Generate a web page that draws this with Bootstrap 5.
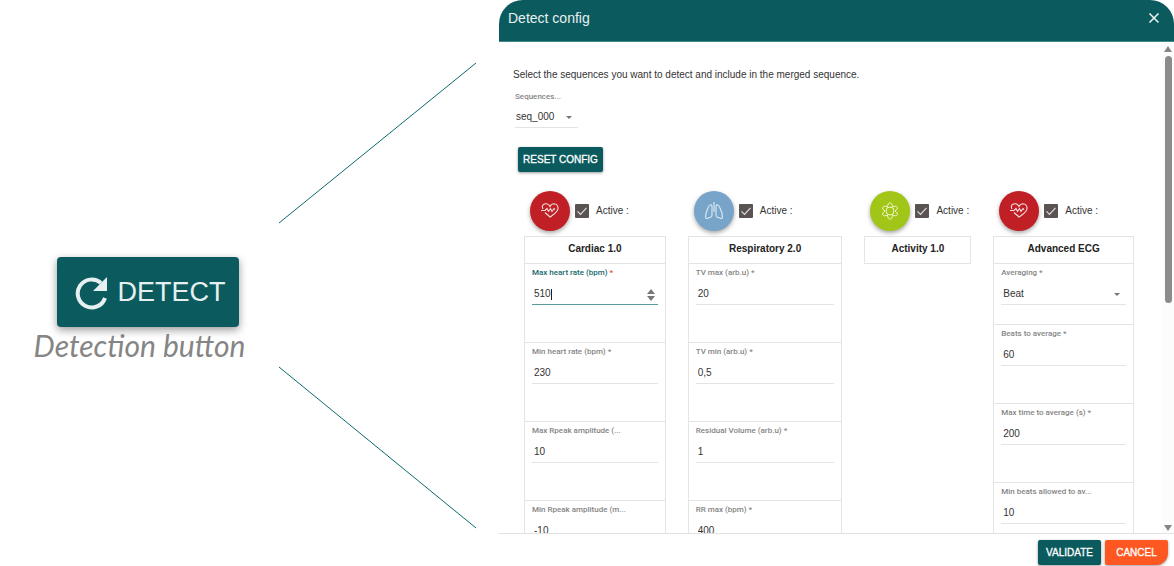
<!DOCTYPE html>
<html lang="en">
<head>
<meta charset="utf-8">
<meta name="viewport" content="width=device-width, initial-scale=1">
<title>Detect config</title>
<link href="https://cdn.jsdelivr.net/npm/bootstrap@5.3.0/dist/css/bootstrap.min.css" rel="stylesheet">
<style>
:root{--teal:#0b5a5e;--rule:#e4e4e4;--ink:#333}
body{font-family:"Liberation Sans",Arial,sans-serif;font-size:10px;line-height:14px;color:var(--ink);background:#fff}
.stage{display:grid;grid-template-columns:279fr 197fr 23fr 675fr;height:100vh}
.callout-col{padding-top:54px}
.btn{--bs-btn-border-width:0;border-radius:2px;color:#fff;white-space:nowrap}
.btn-teal,.btn-teal:hover{background:var(--teal);color:#fff}
.btn-orange,.btn-orange:hover{background:#ff5722;color:#fff}
.btn-detect{width:182px;height:70px;font-size:27px;line-height:32px;padding:0 13px 0 18px;border-radius:4px;color:#e6f0f0;box-shadow:0 3px 8px rgba(0,0,0,.4)}
.btn-small{height:25px;padding:0 5px;font-size:10px;line-height:25px;box-shadow:0 1px 3px rgba(0,0,0,.4);-webkit-text-stroke:.3px #fff}
.reset-btn{width:85px;margin:19px 0 0 19px}
.figure-text{font:italic 30px/36px Lato,sans-serif;color:#858585}
.dialog-head{height:42px;background:var(--teal);border-bottom:1px solid #3f8a8b;border-radius:24px 24px 0 0;padding:0 12px 5px 9px}
.dialog-title{font-size:14px;line-height:18px;color:#e9f1f1}
.dialog-foot{height:33px;border-top:1px solid #e2e2e2;padding:4px 6px 0 0}
.dialog-foot .btn{width:63px}
.dialog-foot .btn-orange{border-bottom-right-radius:12px}
.intro{padding:26px 0 0 14px}
.seq-field{width:63px;margin:10px 0 0 16px}
.tag{display:block;font:500 8px/10px "Roboto","Liberation Sans",sans-serif;color:#858585;white-space:nowrap}
.tag.active-tag{color:#16696c}
.need{color:#f44336}
.entry{display:block;width:100%;border:0;border-bottom:1px solid var(--rule);border-radius:0;padding:0 2px;height:22px;font-size:10px;line-height:21px;color:var(--ink);background:transparent;appearance:none;outline:0}
.seq-field .entry{padding-left:1px}
.entry::-webkit-inner-spin-button{appearance:none}
.entry.active-entry{border-bottom-color:#5a9a9a}
.drop{position:relative}
.drop svg{position:absolute;right:5px;top:10px;pointer-events:none}
.drop .spin{right:3px;top:6px}
.text-cursor{position:absolute;left:19px;top:6px;width:1px;height:11px;background:#222}
.modules{display:grid;grid-template-columns:142fr 155fr 107fr 141fr;column-gap:22px;padding:19px 28px 0 25px}
.module-top{height:45px;padding:0 0 5px 6px}
.disc{width:40px;height:40px;border-radius:50%;box-shadow:0 2px 4px rgba(0,0,0,.35)}
.disc-red{background:#c01f25}.disc-blue{background:#79a4ca}.disc-green{background:#a2c617}
.tick{appearance:none;width:14px;height:14px;margin:0 7px 0 5px;border-radius:1px;background:#5a5351 url("data:image/svg+xml,%3Csvg xmlns='http://www.w3.org/2000/svg' viewBox='0 0 14 14'%3E%3Cpath d='M2.5 7.3l3 3 6-6.500' fill='none' stroke='%23ddd' stroke-width='1.200'/%3E%3C/svg%3E")}
.module-box{border:1px solid var(--rule)}
.module-name{font-size:10px;line-height:24px;height:26px;font-weight:bold;text-align:center;margin:0;color:#222}
.cell{height:79px;border-top:1px solid var(--rule);padding:4px 7px 0}
.cell .entry{margin-top:5px}
.cell-short{height:61px}
.track{width:12px;background:#fcfcfc;padding:4px 0 2px}
.thumb{width:7px;height:51%;border-radius:4px;background:#8b8b8b}
</style>
</head>
<body>
<main class="stage">
  <section class="callout-col d-flex flex-column align-items-center justify-content-center">
    <figure class="m-0 d-flex flex-column align-items-center">
      <button type="button" class="btn btn-teal btn-detect d-flex align-items-center justify-content-between ms-3">
        <svg width="36" height="36" viewBox="0 0 36 36" aria-hidden="true"><path d="M30 24A14 14 0 1 1 26 9" fill="none" stroke="#e6f0f0" stroke-width="4"/><path d="M32 3V17H18Z" fill="#e6f0f0"/></svg>
        <span>DETECT</span>
      </button>
      <figcaption class="figure-text text-nowrap">Detection button</figcaption>
    </figure>
  </section>

  <svg width="100%" height="100%" viewBox="0 0 197 566" preserveAspectRatio="none" aria-hidden="true"><path d="M0 223L197 63M0 367L197 528" fill="none" stroke="#0b6a6b" stroke-width="1"/></svg>
  <span></span>

  <section class="d-flex flex-column overflow-hidden" role="dialog" aria-labelledby="dialogTitle">
    <header class="dialog-head d-flex align-items-center justify-content-between flex-shrink-0">
      <h1 class="dialog-title m-0 fw-normal" id="dialogTitle">Detect config</h1>
      <button type="button" class="border-0 bg-transparent p-0 d-flex" aria-label="Close"><svg width="16" height="16" viewBox="0 0 16 16"><path d="M3.500 3.500l9 9M12.500 3.500l-9 9" stroke="#eef5f5" stroke-width="1.500"/></svg></button>
    </header>

    <div class="d-flex flex-fill overflow-hidden">
      <div class="flex-fill overflow-hidden">
        <p class="intro m-0">Select the sequences you want to detect and include in the merged sequence.</p>
        <div class="seq-field">
          <label class="tag" for="seq">Sequences...</label>
          <div class="drop mt-1">
            <select class="entry" id="seq"><option>seq_000</option></select>
            <svg width="8" height="4"><path d="M1 0h6L4 3z" fill="#777"/></svg>
          </div>
        </div>
        <button type="button" class="btn btn-teal btn-small reset-btn">RESET CONFIG</button>

        <div class="modules align-items-start">
          <section>
            <div class="module-top d-flex align-items-center">
              <span class="disc disc-red d-flex align-items-center justify-content-center"><svg width="18" height="16" viewBox="0 0 18 16" fill="none" stroke="#f6dcdc" stroke-width="1.100"><path d="M2 6C0 2 3 .7 5.500 .8 7.500 1 8.500 2.500 9 3.500 9.500 2.500 11 .8 13 .8 17 1 18 5 16 8 14.500 10.500 11 12.500 9 14 7.500 12.500 5.500 11 4 9.500"/><path d="M0 7.500h4l2-2 1.500 3 2-3 1.500 3 2-3 1 1"/></svg></span>
              <input class="tick" type="checkbox" id="a1" checked><label for="a1">Active :</label>
            </div>
            <div class="module-box">
              <h2 class="module-name">Cardiac 1.0</h2>
              <div class="cell"><label class="tag active-tag" for="c1">Max heart rate (bpm) <span class="need">*</span></label>
                <div class="drop"><input class="entry active-entry" type="number" id="c1" value="510"><span class="text-cursor"></span>
                <svg class="spin" width="8" height="12" viewBox="0 0 8 12"><path d="M4 0l4 5H0zM0 7h8l-4 5z" fill="#777"/></svg></div></div>
              <div class="cell"><label class="tag" for="c2">Min heart rate (bpm) *</label><input class="entry" type="number" id="c2" value="230"></div>
              <div class="cell"><label class="tag" for="c3">Max Rpeak amplitude (...</label><input class="entry" type="number" id="c3" value="10"></div>
              <div class="cell"><label class="tag" for="c4">Min Rpeak amplitude (m...</label><input class="entry" type="number" id="c4" value="-10"></div>
            </div>
          </section>

          <section>
            <div class="module-top d-flex align-items-center">
              <span class="disc disc-blue d-flex align-items-center justify-content-center"><svg width="18" height="18" viewBox="0 0 18 18" fill="none" stroke="#dcebf6" stroke-width="1.100"><path d="M9 0v10M7 4C6 2 4 3 3 6 1.500 9 .6 12 .6 15q0 2 2 1.300L6 15q1-.5 1-2V4M11 4c1-2 3-1 4 2 1.500 3 2.400 6 2.400 9q0 2-2 1.300L12 15q-1-.5-1-2V4"/></svg></span>
              <input class="tick" type="checkbox" id="a2" checked><label for="a2">Active :</label>
            </div>
            <div class="module-box">
              <h2 class="module-name">Respiratory 2.0</h2>
              <div class="cell"><label class="tag" for="r1">TV max (arb.u) *</label><input class="entry" type="text" id="r1" value="20"></div>
              <div class="cell"><label class="tag" for="r2">TV min (arb.u) *</label><input class="entry" type="text" id="r2" value="0,5"></div>
              <div class="cell"><label class="tag" for="r3">Residual Volume (arb.u) *</label><input class="entry" type="text" id="r3" value="1"></div>
              <div class="cell"><label class="tag" for="r4">RR max (bpm) *</label><input class="entry" type="text" id="r4" value="400"></div>
            </div>
          </section>

          <section>
            <div class="module-top d-flex align-items-center">
              <span class="disc disc-green d-flex align-items-center justify-content-center"><svg width="18" height="18" viewBox="0 0 18 18" fill="none" stroke="#eff7c8" stroke-width="1"><circle cx="9" cy="9" r="4"/><path d="M6.500 5C6.500-.5 11.500-.5 11.500 5 16 2.500 18.500 6.500 14 9c4.500 2.500 2 6.500-2.500 4 0 5.500-5 5.500-5 0C2 15.500-.5 11.500 4 9-.5 6.500 2 2.500 6.500 5z"/></svg></span>
              <input class="tick" type="checkbox" id="a3" checked><label for="a3">Active :</label>
            </div>
            <div class="module-box"><h2 class="module-name">Activity 1.0</h2></div>
          </section>

          <section>
            <div class="module-top d-flex align-items-center">
              <span class="disc disc-red d-flex align-items-center justify-content-center"><svg width="18" height="16" viewBox="0 0 18 16" fill="none" stroke="#f6dcdc" stroke-width="1.100"><path d="M2 6C0 2 3 .7 5.500 .8 7.500 1 8.500 2.500 9 3.500 9.500 2.500 11 .8 13 .8 17 1 18 5 16 8 14.500 10.500 11 12.500 9 14 7.500 12.500 5.500 11 4 9.500"/><path d="M0 7.500h4l2-2 1.500 3 2-3 1.500 3 2-3 1 1"/></svg></span>
              <input class="tick" type="checkbox" id="a4" checked><label for="a4">Active :</label>
            </div>
            <div class="module-box">
              <h2 class="module-name">Advanced ECG</h2>
              <div class="cell cell-short"><label class="tag" for="e1">Averaging *</label>
                <div class="drop"><select class="entry" id="e1"><option>Beat</option></select><svg width="8" height="4"><path d="M1 0h6L4 3z" fill="#777"/></svg></div></div>
              <div class="cell"><label class="tag" for="e2">Beats to average *</label><input class="entry" type="number" id="e2" value="60"></div>
              <div class="cell"><label class="tag" for="e3">Max time to average (s) *</label><input class="entry" type="number" id="e3" value="200"></div>
              <div class="cell"><label class="tag" for="e4">Min beats allowed to av...</label><input class="entry" type="number" id="e4" value="10"></div>
            </div>
          </section>
        </div>
      </div>
      <div class="track d-flex flex-column align-items-center flex-shrink-0" aria-hidden="true">
        <svg class="mb-1" width="8" height="6"><path d="M4 0l4 6H0z" fill="#858585"/></svg>
        <div class="thumb"></div>
        <svg class="mt-auto" width="8" height="6"><path d="M0 0h8L4 6z" fill="#858585"/></svg>
      </div>
    </div>

    <footer class="dialog-foot d-flex align-items-center justify-content-end gap-1 flex-shrink-0">
      <button type="button" class="btn btn-teal btn-small">VALIDATE</button>
      <button type="button" class="btn btn-orange btn-small">CANCEL</button>
    </footer>
  </section>
</main>
<script src="https://cdn.jsdelivr.net/npm/bootstrap@5.3.0/dist/js/bootstrap.bundle.min.js"></script>
</body>
</html>
